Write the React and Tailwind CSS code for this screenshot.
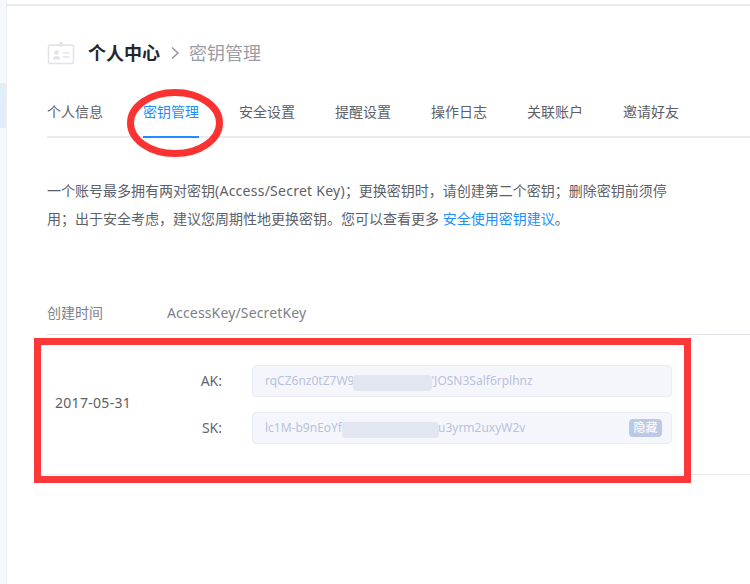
const tabs = ["个人信息", "密钥管理", "安全设置", "提醒设置", "操作日志", "关联账户", "邀请好友"];

function CardIcon() {
  return (
    <svg width="28" height="24" viewBox="0 0 28 24" fill="none" className="shrink-0">
      <rect x="1.5" y="4" width="25" height="18.5" rx="1.5" stroke="#e1e3e8" strokeWidth="1.6" />
      <rect x="12.5" y="1" width="3" height="5" rx="1" fill="#e1e3e8" />
      <circle cx="9.5" cy="11.5" r="2.3" fill="#e1e3e8" />
      <path d="M5.5 18.5c.4-2.6 1.8-3.6 4-3.6s3.6 1 4 3.6z" fill="#e1e3e8" />
      <path d="M16 12h6.5M16 16h6.5" stroke="#e1e3e8" strokeWidth="1.5" />
    </svg>
  );
}

function KeyField({ label, before, after, gap, blurLeft, blurWidth, children }) {
  return (
    <div className="flex items-center">
      <span className="w-[62px] text-right text-sm text-[#5f6470]">{label}</span>
      <div className="relative ml-[30px] flex h-[32px] w-[420px] items-center rounded border border-[#e9edf5] bg-[#f5f6fb] pl-3 pr-[9px] text-xs text-[#b9c2dc]">
        <span>{before}</span>
        <span style={{ width: gap }} className="shrink-0" />
        <span>{after}</span>
        {children}
        <div
          style={{ left: blurLeft, width: blurWidth }}
          className="absolute top-[9px] h-[16px] rounded-sm bg-[#e2e6f0]"
        />
      </div>
    </div>
  );
}

export default function App() {
  return (
    <div
      className="relative flex h-[584px] w-[750px] overflow-hidden bg-white"
      style={{ fontFamily: '"Noto Sans", "Noto Sans CJK SC", sans-serif' }}
    >
      <aside className="w-[7px] shrink-0 border-r border-[#eceef4] bg-[#f6f8fc] pt-[83px]">
        <div className="h-[45px] bg-[#e1ecf9]" />
      </aside>

      <main className="min-w-0 flex-1">
        <div className="h-[6px] border-b-2 border-[#e9ebf0]" />

        <div className="pl-[40px]">
          <div className="mt-[35px] flex h-[24px] items-center">
            <CardIcon />
            <span className="ml-[13px] text-lg font-bold text-[#23262e]">个人中心</span>
            <svg width="10" height="14" viewBox="0 0 10 14" fill="none" className="ml-[10px] mr-[9px]">
              <path d="M2 1.5l6 5.5-6 5.5" stroke="#8f939c" strokeWidth="1.4" />
            </svg>
            <span className="text-lg text-[#9a9da5]">密钥管理</span>
          </div>

          <nav className="mt-[29px] flex h-[44px] gap-10 border-b-2 border-[#e9ebf0]">
            {tabs.map((t, i) => (
              <div
                key={t}
                className={
                  i === 1
                    ? "h-[44px] border-b-2 border-[#1e8eff] pt-[6px] text-sm leading-[24px] text-[#1e8eff]"
                    : "pt-[6px] text-sm leading-[24px] text-[#5c6068]"
                }
              >
                {t}
              </div>
            ))}
          </nav>

          <p className="mt-[39px] w-[630px] text-sm leading-[28px] text-[#5c6068]">
            一个账号最多拥有两对密钥<span className="tracking-[0.25px]">(Access/Secret Key)</span>；更换密钥时，请创建第二个密钥；删除密钥前须停用；出于安全考虑，建议您周期性地更换密钥。您可以查看更多{" "}
            <span className="text-[#1e8eff]">安全使用密钥建议</span>。
          </p>

          <div className="mt-[60px] flex h-[42px] items-center border-b border-[#e2e4ea] pb-[2px] text-sm text-[#7d8089]">
            <span className="w-[120px]">创建时间</span>
            <span className="tracking-[0.15px]">AccessKey/SecretKey</span>
          </div>

          <div className="flex h-[140px] items-center border-b border-[#e9ebf0] pl-2">
            <span className="mb-[3px] w-[105px] text-sm tracking-[0.3px] text-[#5c6068]">2017-05-31</span>
            <div className="flex flex-col gap-[15px]">
              <KeyField label="AK:" before="rqCZ6nz0tZ7W9" after="'JOSN3Salf6rplhnz" gap={77} blurLeft={100} blurWidth={79} />
              <KeyField label="SK:" before="lc1M-b9nEoYf" after="u3yrm2uxyW2v" gap={96} blurLeft={89} blurWidth={97}>
                <span className="absolute right-[9px] top-[6px] rounded-sm bg-[#bcc9e6] px-[4.5px] text-xs leading-[18px] text-white">
                  隐藏
                </span>
              </KeyField>
            </div>
          </div>
        </div>
      </main>

      {/* red annotations drawn over the page */}
      <svg width="100" height="72" viewBox="0 0 100 72" fill="none" className="absolute left-[125px] top-[87px]">
        <ellipse cx="50" cy="36" rx="44.5" ry="30.5" stroke="#fb3232" strokeWidth="7" />
      </svg>
      <div className="absolute left-[34px] top-[338px] h-[145px] w-[657px] border-[7px] border-[#fc3838]" />
    </div>
  );
}
